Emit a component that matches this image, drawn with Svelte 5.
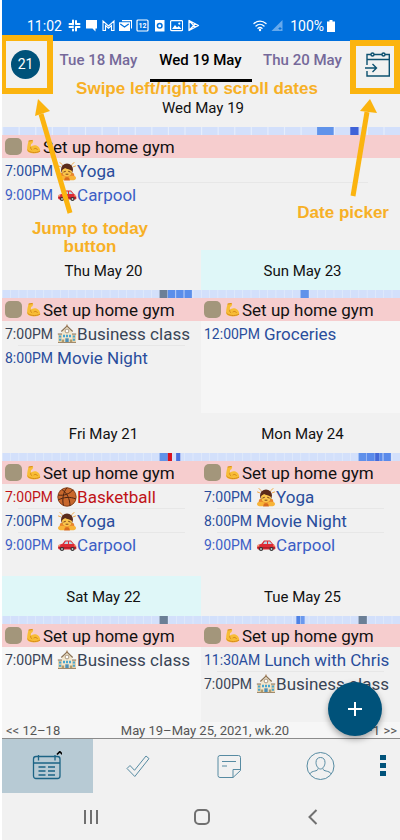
<script>
  const gym = { title: 'Set up home gym' };

  const yoga = { time: '7:00PM', icon: 'bow', title: 'Yoga', tone: 'blue' };
  const carpool = { time: '9:00PM', icon: 'car', title: 'Carpool', tone: 'royal' };
  const business = { time: '7:00PM', icon: 'school', title: 'Business class', tone: 'slate' };
  const movie = { time: '8:00PM', title: 'Movie Night', tone: 'blue' };

  // busy: [start hour, length, color]
  const firstDay = {
    name: 'Wed May 19',
    busy: [[19, 1, '#6093ea'], [21, 0.5, '#3f62d8']],
    events: [yoga, carpool]
  };

  const days = [
    {
      name: 'Thu May 20',
      busy: [[19, 0.95, '#6b7f96'], [20, 0.9, '#5a8eea'], [21, 0.9, '#5a8eea'], [22, 0.9, '#5a8eea']],
      events: [business, movie]
    },
    {
      name: 'Fri May 21',
      busy: [[19, 1, '#6093ea'], [20, 0.5, '#d8121f'], [21, 0.5, '#4a70dc']],
      events: [{ time: '7:00PM', icon: 'ball', title: 'Basketball', tone: 'red' }, yoga, carpool]
    },
    {
      name: 'Sat May 22',
      weekend: true,
      busy: [[19, 1, '#6b7f96']],
      events: [business]
    },
    {
      name: 'Sun May 23',
      weekend: true,
      busy: [[12, 1, '#6093ea']],
      events: [{ time: '12:00PM', title: 'Groceries', tone: 'blue' }]
    },
    {
      name: 'Mon May 24',
      busy: [[19, 0.95, '#5f90ea'], [20, 0.95, '#5a8aea'], [21, 0.5, '#4468d8'], [21.5, 0.4, '#5a8aea'], [22, 0.9, '#5a8aea']],
      events: [yoga, movie, carpool]
    },
    {
      name: 'Tue May 25',
      busy: [[11.5, 0.45, '#4f82e4'], [12, 0.5, '#6b99ee'], [19, 1, '#6b7f96']],
      events: [{ time: '11:30AM', title: 'Lunch with Chris', tone: 'blue' }, business]
    }
  ];

  const hours = Array.from({ length: 24 }, (_, i) => i);
  let view = $state('calendar');
</script>

{#snippet emoji(name)}
  {#if name === 'arm'}
    <svg class="arm" viewBox="0 0 16 16" aria-hidden="true">
      <path d="M3 1.5 6.5 1c1 0 1.3 1 1 2L6.8 4.6 5.5 5.2 5 8.6c1.5-1.8 4-2.6 6.2-1.6 2.6 1 4 3.5 4 6-2 2.2-6.5 2.8-10 2-3-.7-4.4-2.2-4-5C1.5 7 2 4 3 1.5z" fill="#f8bd35" />
      <path d="M3.2 2.2l3.400-.6M5 8.600c-.2 1.400.2 2.200 1.200 2.800M8.500 10.500c1.500-1 3-.5 3.600.7M1.800 12c2 2.500 8 3.500 12.800 1.200" fill="none" stroke="#cf8116" stroke-width=".9" stroke-linecap="round" />
    </svg>
  {:else if name === 'bow'}
    <svg class="emoji" viewBox="0 0 20 20" aria-hidden="true">
      <path d="M3 1.500l2 2M1.500 5l2 .7M17 1.500l-2 2M18.500 5l-2 .7" stroke="#f2a33c" stroke-width="1" stroke-linecap="round" />
      <path d="M3 13c1-3 13-3 14 0l1 5H2z" fill="#e9842b" />
      <circle cx="10" cy="8.500" r="6" fill="#5b2b1a" />
      <path d="M5 10c0-1.500 2-2 3-3 2 1.500 5 1 7 3 0 3-2 5.500-5 5.500S5 13 5 10z" fill="#fbc64c" />
      <path d="M6.800 11l1.600-.6M13.200 11l-1.600-.6M9 13.200h2" stroke="#6b3517" stroke-width=".9" stroke-linecap="round" />
      <ellipse cx="5" cy="17" rx="4" ry="2.300" fill="#f8b437" />
      <ellipse cx="15" cy="17" rx="4" ry="2.300" fill="#f8b437" />
      <path d="M8 16.500h4l1 3H7z" fill="#d86c1f" />
    </svg>
  {:else if name === 'car'}
    <svg class="emoji" viewBox="0 0 20 20" aria-hidden="true">
      <path d="M1 13l.5-3 4-1.200L8 5.500h6l3 3.600 2 1.200.5 3.200-1 1H2z" fill="#dd2b35" />
      <path d="M7 9l1.700-2.600H11V9zM12 9V6.400h1.700L16 9z" fill="#b9d8e6" />
      <path d="M1.500 12.800h17.500" stroke="#8d1620" stroke-width=".8" />
      <path d="M1.400 10.800h1.800M17.500 10.800H19" stroke="#ffe08a" stroke-width="1" />
      <circle cx="5" cy="14" r="2.100" fill="#333" />
      <circle cx="15.500" cy="14" r="2.100" fill="#333" />
      <circle cx="5" cy="14" r=".9" fill="#ccc" />
      <circle cx="15.500" cy="14" r=".9" fill="#ccc" />
    </svg>
  {:else if name === 'school'}
    <svg class="emoji" viewBox="0 0 20 20" aria-hidden="true">
      <path d="M1 10h18v8H1z" fill="#e6d3b0" />
      <path d="M5 7l5-4.500L15 7v11H5z" fill="#f3e6cc" />
      <path d="M4.300 7.500 10 2l5.700 5.500M.8 10H5M15 10h4.200" fill="none" stroke="#8a7358" stroke-width="1.200" />
      <path d="M9.500.5h1V3h-1z" fill="#a2744a" />
      <circle cx="10" cy="7" r="1.900" fill="#fff" stroke="#8a7358" stroke-width=".7" />
      <path d="M2 11.500h2.200v2H2zM2 14.700h2.200v2H2zM15.800 11.500H18v2h-2.200zM15.800 14.700H18v2h-2.200zM6 10.800h2v2.500H6zM12 10.800h2v2.500h-2zM9 10.800h2v2.500H9z" fill="#48a6cf" />
      <path d="M8.300 14.300h3.400V18H8.300z" fill="#4d8fb5" />
      <path d="M4.800 15.500h2.400V18H4.800zM12.800 15.500h2.400V18h-2.400z" fill="#b09a6a" />
      <path d="M1 18.500h18" stroke="#a08a6c" />
    </svg>
  {:else if name === 'ball'}
    <svg class="emoji" viewBox="0 0 20 20" aria-hidden="true">
      <circle cx="10" cy="10" r="9.400" fill="#c9682c" />
      <path d="M5 2.500C10 6 13 12 13 19M1 8c6 1 12-1 15-5.500M1 13c6-3 12-3.500 18-1M10 .8C6 5 5 13 6.500 18.500" fill="none" stroke="#4c2412" stroke-width="1" />
      <circle cx="10" cy="10" r="9.200" fill="none" stroke="#6b3216" stroke-width=".7" />
    </svg>
  {/if}
{/snippet}

{#snippet dayCard(day)}
  <section class="day" class:weekend={day.weekend}>
    <h2>{day.name}</h2>
    <svg class="strip" viewBox="0 0 240 8" preserveAspectRatio="none" aria-hidden="true">
      <rect width="240" height="8" fill="#d3e0fb" />
      {#each hours as h}
        <rect x={h * 10} y="0" width=".7" height="8" fill="#e6eefc" />
      {/each}
      {#each day.busy as [start, length, color]}
        <rect x={start * 10} y="0" width={length * 10} height="8" fill={color} />
      {/each}
    </svg>
    <div class="all-day">
      <span class="tag"></span>
      {@render emoji('arm')}
      <span>{gym.title}</span>
    </div>
    <ul>
      {#each day.events as event}
        <li class={event.tone}>
          <time>{event.time}</time>
          {#if event.icon}{@render emoji(event.icon)}{/if}<span>{event.title}</span>
        </li>
      {/each}
    </ul>
  </section>
{/snippet}

<div class="phone">
  <div class="status">
    <span class="clock">11:02</span>
    <div class="notices">
      <svg viewBox="0 0 13 13"><path d="M5 1.500v4M1.500 5h1M8 2v3M10.500 5h1M1.500 8H5M5 10.500v1M8 8v3.500M8 8h3.500M1.500 5H5M8 5h3" stroke="#fff" stroke-width="2" stroke-linecap="round" /></svg>
      <svg viewBox="0 0 13 13"><path d="M1 1h11v8.500h-1.500V12.500L7.500 9.500H1z" fill="#fff" /></svg>
      <svg viewBox="0 0 13 13"><path d="M1 11.500V2l5.500 5L12 2v9.500H9.500V6.500l-3 2.700-3-2.700v5z" fill="none" stroke="#fff" stroke-width="1.100" /></svg>
      <svg viewBox="0 0 13 13"><path d="M3 1h10v8.500h-1V2.300H3zM0 3.200h11V12H0z" fill="#fff" /><path d="M1.300 5l4.200 3 4.200-3" fill="none" stroke="#0070dd" stroke-width="1.200" /></svg>
      <svg viewBox="0 0 13 13"><rect x="1" y="1" width="11" height="11" rx="1" fill="none" stroke="#fff" stroke-width="1.200" /><text x="6.500" y="9.300" text-anchor="middle">12</text></svg>
      <svg viewBox="0 0 13 13"><rect x="2" y="1" width="9.500" height="11.500" fill="#fff" /><circle cx="6.700" cy="6.700" r="2.300" fill="none" stroke="#0070dd" stroke-width="1.500" /></svg>
      <svg viewBox="0 0 13 13"><rect x=".6" y="1.600" width="12" height="10" rx="1" fill="none" stroke="#fff" stroke-width="1.200" /><path d="M2 10l3-4 2 2.500L8.800 7l2.700 3z" fill="#fff" /><circle cx="9.300" cy="4.600" r="1.100" fill="#fff" /></svg>
      <svg viewBox="0 0 13 13"><path d="M2 1.500v10l9.500-5zM2 1.500l6.500 7M2 11.500l6.500-7" fill="none" stroke="#fff" stroke-width="1.300" stroke-linejoin="round" /></svg>
    </div>
    <div class="signal">
      <svg viewBox="0 0 14 13"><path d="M1 4.500c3.500-3.300 8.500-3.300 12 0M3 7c2.300-2.200 5.700-2.200 8 0M5 9.300c1.200-1 2.800-1 4 0" fill="none" stroke="#fff" stroke-width="1.300" stroke-linecap="round" /><circle cx="7" cy="11" r="1.200" fill="#fff" /></svg>
      <svg viewBox="0 0 14 13"><path d="M12.500 1v11h-11z" fill="#66a9ec" /><path d="M10 8v3M8.500 9.500h3" stroke="#0070dd" stroke-width="1" /></svg>
      <span>100%</span>
      <svg class="battery" viewBox="0 0 8 12"><path d="M2.500 0h3v1.500H8V12H0V1.500h2.500z" fill="#fff" /></svg>
    </div>
  </div>

  <nav class="dates">
    <button class="today" aria-label="Jump to today">21</button>
    <div class="tabs">
      <button>Tue 18 May</button>
      <button class="on">Wed 19 May</button>
      <button>Thu 20 May</button>
    </div>
    <button class="picker" aria-label="Date picker">
      <svg viewBox="0 0 26 26" fill="none" stroke="#0c5170" stroke-width="1.400">
        <path d="M2 14V3.500h4M9 3.500h8M20 3.500h4.300V25H2v-5M2 8.500h22" />
        <circle cx="7.500" cy="3.500" r="1.500" />
        <circle cx="18.500" cy="3.500" r="1.500" />
        <path d="M0 17h11M7.500 13l4 4-4 4" />
      </svg>
    </button>
  </nav>

  <main>
    {@render dayCard(firstDay)}
    <div class="week">
      {#each days as day}
        {@render dayCard(day)}
      {/each}
    </div>
    <button class="add" aria-label="Add event">
      <svg viewBox="0 0 14 14"><path d="M7 0v14M0 7h14" stroke="#fff" stroke-width="2" /></svg>
    </button>
  </main>

  <div class="pager">
    <button>&lt;&lt; 12–18</button>
    <span>May 19–May 25, 2021, wk.20</span>
    <button>26–1 &gt;&gt;</button>
  </div>

  <nav class="toolbar">
    <button class:active={view === 'calendar'} onclick={() => (view = 'calendar')} aria-label="Calendar">
      <svg viewBox="0 0 30 30" fill="none" stroke="#1d6485" stroke-width="1.300">
        <rect x="1.500" y="5.500" width="26.500" height="22" rx="2.500" />
        <path d="M1.500 12h26.500M6.500 4v5.500M23 4v5.500" />
        <path d="M6.500 16h7M16 16h7M6.500 20h7M16 20h7M6.500 24h7M16 24h7" />
        <path d="M25 3.500l2.800-2.800 2.800 2.800" stroke="#000" stroke-width="1.700" />
      </svg>
    </button>
    <button class:active={view === 'tasks'} onclick={() => (view = 'tasks')} aria-label="Tasks">
      <svg viewBox="0 0 30 30" fill="none" stroke="#578ba2" stroke-width="1">
        <path d="M4 17.500l3-3 4.500 4.800L23 5l3 2.600L11.800 25.500z" />
      </svg>
    </button>
    <button class:active={view === 'notes'} onclick={() => (view = 'notes')} aria-label="Notes">
      <svg viewBox="0 0 30 30" fill="none" stroke="#578ba2" stroke-width="1">
        <path d="M6 4.500h18.500q2 0 2 2v13L19 26.500H6q-2 0-2-2v-18q0-2 2-2zM26.500 18.500H19v8M8 10.500h14M8 15h5" />
      </svg>
    </button>
    <button class:active={view === 'contacts'} onclick={() => (view = 'contacts')} aria-label="Contacts">
      <svg viewBox="0 0 30 30" fill="none" stroke="#578ba2" stroke-width="1">
        <circle cx="15.500" cy="15" r="13.500" />
        <path d="M15.500 6.500c-3 0-4.500 2-4.500 5s2 6.500 4.500 6.500 4.500-3.500 4.500-6.500-1.500-5-4.500-5zM13 17.500c0 3.500-6 1.500-8.300 5.500M18 17.500c0 3.500 6 1.500 8.300 5.500" />
      </svg>
    </button>
    <button class="more" aria-label="More">
      <svg viewBox="0 0 6 22"><path d="M0 0h6v5H0zM0 8h6v5H0zM0 16h6v5H0z" fill="#00527a" /></svg>
    </button>
  </nav>

  <div class="system">
    <button aria-label="Recent apps"><svg viewBox="0 0 18 18"><path d="M3 2v14M9 2v14M15 2v14" /></svg></button>
    <button aria-label="Home"><svg viewBox="0 0 18 18"><rect x="2" y="2" width="14" height="14" rx="4" /></svg></button>
    <button aria-label="Back"><svg viewBox="0 0 18 18"><path d="M12.500 2l-7 7 7 7" /></svg></button>
  </div>

  <div class="note swipe">Swipe left/right to scroll dates</div>
  <div class="frame left"></div>
  <svg class="arrow left" viewBox="0 0 50 120">
    <path d="M17 16L46 115" />
    <polygon points="14,1 26,13 11,18" />
  </svg>
  <div class="note jump">Jump to today button</div>
  <div class="frame right"></div>
  <svg class="arrow right" viewBox="0 0 50 120">
    <path d="M37 14L23 98" />
    <polygon points="40,1 47,15 30,13" />
  </svg>
  <div class="note pick">Date picker</div>
</div>

<style>
  :global(body) { margin: 0; background: #fff; }
  .phone {
    position: relative;
    display: flex;
    flex-direction: column;
    margin-left: 2px;
    background: #f1f1f1;
    font-family: Roboto, "Noto Sans", sans-serif;
    color: #111;
    overflow: hidden;
  }
  button { font: inherit; color: inherit; background: none; border: 0; padding: 0; cursor: pointer; }
  svg { display: block; flex-shrink: 0; }

  .status {
    display: flex;
    align-items: center;
    height: 41px;
    box-sizing: border-box;
    padding: 10px 65px 0 25px;
    background: #0070dd;
    color: #fff;
    font-size: 14px;
  }
  .notices { display: flex; gap: 4px; margin-left: 6px; }
  .notices svg { width: 13px; height: 13px; }
  .notices text { font-size: 7px; font-weight: 700; fill: #fff; }
  .signal { display: flex; align-items: center; gap: 3px; margin-left: auto; }
  .signal svg { width: 14px; height: 13px; }
  .signal span { margin-left: 3px; }
  .signal .battery { width: 8px; height: 12px; }

  .dates { display: flex; align-items: center; height: 46px; padding: 0 9px; }
  .today {
    width: 29px;
    height: 29px;
    border-radius: 50%;
    background: #00527a;
    color: #fff;
    font-size: 14px;
  }
  .tabs { flex: 1; display: flex; justify-content: center; align-self: stretch; padding-right: 4px; }
  .tabs button {
    width: 102px;
    height: 41px;
    box-sizing: border-box;
    border-bottom: 3px solid transparent;
    color: #75699a;
    font-size: 15px;
    font-weight: 500;
    white-space: nowrap;
  }
  .tabs .on { color: #000; border-color: #000; }
  .picker svg { width: 26px; height: 26px; }

  main { position: relative; }
  .week {
    display: grid;
    grid-template-columns: 1fr 1fr;
    grid-template-rows: 163px 163px 146px;
    grid-auto-flow: column;
  }
  .day { display: flex; flex-direction: column; min-width: 0; }
  main > .day { height: 163px; }
  h2 {
    height: 40px;
    margin: 0;
    padding-left: 4px;
    font-size: 15px;
    font-weight: 400;
    line-height: 42px;
    text-align: center;
  }
  .weekend { background: #f6f6f6; }
  .weekend h2 { background: #dff7f8; }
  .strip { width: 100%; height: 8px; }
  .all-day {
    display: flex;
    align-items: center;
    height: 23px;
    padding-left: 3px;
    background: #f6cdce;
    font-size: 17px;
    white-space: nowrap;
  }
  .tag { width: 17px; height: 17px; margin-right: 4px; border-radius: 5px; background: #a3967b; }
  .arm { width: 15px; height: 15px; margin-right: 2px; }
  ul { flex: 1; margin: 0; padding: 1px 0 0; list-style: none; }
  li {
    display: flex;
    align-items: center;
    height: 24px;
    padding-left: 3px;
    font-size: 17px;
    white-space: nowrap;
    background: linear-gradient(#e7e7e7, #e7e7e7) 50% 100% / 84% 1px no-repeat;
  }
  li:last-child { background: none; }
  time { font-size: 14px; margin-right: 4px; }
  .emoji { width: 20px; height: 20px; }
  .blue { color: #294d9c; }
  .royal { color: #3c5fc6; }
  .slate { color: #3a4556; }
  .red { color: #c01318; }

  .add {
    position: absolute;
    right: 18px;
    bottom: -14px;
    display: flex;
    align-items: center;
    justify-content: center;
    width: 54px;
    height: 54px;
    border-radius: 50%;
    background: #00527a;
    box-shadow: 0 3px 6px rgba(0, 0, 0, 0.35);
    z-index: 1;
  }
  .add svg { width: 14px; height: 14px; }

  .pager {
    display: flex;
    justify-content: space-between;
    padding: 0 3px 0 4px;
    height: 16px;
    line-height: 18px;
    background: #f6f6f6;
    border-bottom: 1px solid #8b8b8b;
    color: #555;
    font-size: 13px;
  }

  .toolbar { display: flex; height: 54px; }
  .toolbar button { flex: 8; display: flex; align-items: center; justify-content: center; }
  .toolbar .active { background: #b7cad4; }
  .toolbar svg { width: 30px; height: 30px; }
  .toolbar .more { flex: 3; }
  .toolbar .more svg { width: 6px; height: 22px; }

  .system { display: flex; height: 47px; padding: 0 32px 0 34px; }
  .system button { flex: 1; display: flex; align-items: center; justify-content: center; }
  .system svg { width: 18px; height: 18px; fill: none; stroke: #707070; stroke-width: 2; }

  /* callouts over the app */
  .note {
    position: absolute;
    color: #f7b026;
    font: bold 17px/18px "Liberation Sans", Arial, sans-serif;
    text-align: center;
    pointer-events: none;
  }
  .swipe { top: 80px; left: 0; right: 8px; }
  .jump { top: 220px; left: 28px; width: 120px; }
  .pick { top: 204px; right: 11px; }
  .frame { position: absolute; box-sizing: border-box; border: 6px solid #fbb40f; pointer-events: none; }
  .frame.left { top: 35px; left: -2px; width: 53px; height: 59px; }
  .frame.right { top: 40px; right: 0; width: 50px; height: 54px; }
  .arrow { position: absolute; top: 98px; width: 50px; height: 120px; pointer-events: none; }
  .arrow.left { left: 22px; }
  .arrow.right { right: 20px; }
  .arrow path { stroke: #fbb40f; stroke-width: 5; }
  .arrow polygon { fill: #fbb40f; }
</style>
